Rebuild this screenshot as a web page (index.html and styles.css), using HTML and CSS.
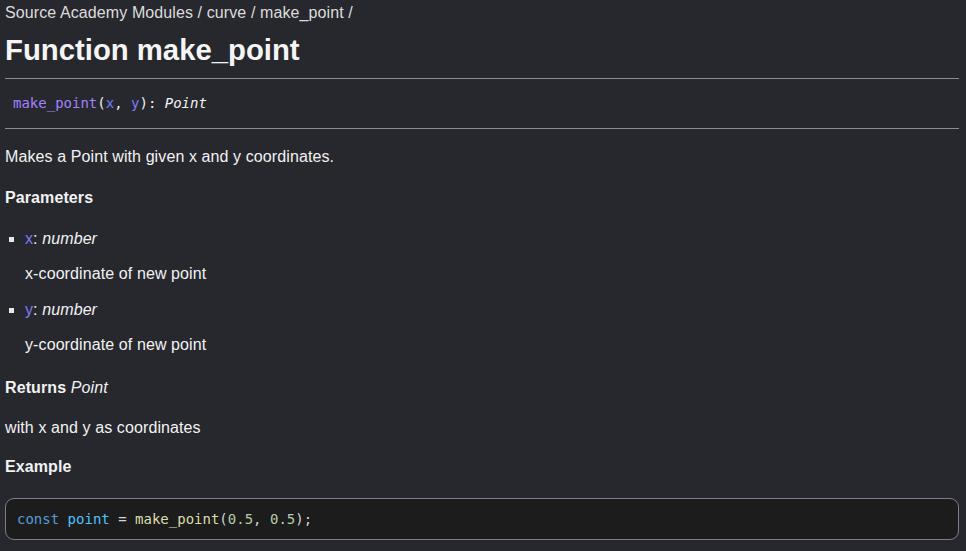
FILE: index.html
```html
<!DOCTYPE html>
<html lang="en">
<head>
<meta charset="utf-8">
<title>make_point</title>
<link rel="stylesheet" href="styles.css">
</head>
<body>
<div class="page">
  <div class="breadcrumb">Source Academy Modules / curve / make_point /</div>
  <h1 class="title">Function make_point</h1>
  <div class="signature"><span class="fn">make_point</span>(<span class="param">x</span>, <span class="param">y</span>): <em class="type">Point</em></div>
  <p class="desc">Makes a Point with given x and y coordinates.</p>
  <h4 class="heading">Parameters</h4>
  <ul class="params">
    <li>
      <div class="param-line"><span class="param">x</span>: <em>number</em></div>
      <p class="param-desc">x-coordinate of new point</p>
    </li>
    <li>
      <div class="param-line"><span class="param">y</span>: <em>number</em></div>
      <p class="param-desc">y-coordinate of new point</p>
    </li>
  </ul>
  <h4 class="heading returns">Returns <em class="ret-type">Point</em></h4>
  <p class="desc ret-desc">with x and y as coordinates</p>
  <h4 class="heading example">Example</h4>
  <pre class="code"><code><span class="kw">const</span> <span class="var">point</span> <span class="pun">=</span> <span class="call">make_point</span><span class="pun">(</span><span class="num">0.5</span><span class="pun">,</span> <span class="num">0.5</span><span class="pun">);</span></code></pre>
</div>
</body>
</html>
```
FILE: styles.css
```css
html, body {
  margin: 0;
  padding: 0;
  background: #27282e;
}
body {
  color: #f2f2f2;
  font-family: "Liberation Sans", Arial, sans-serif;
  font-size: 16px;
  letter-spacing: 0.1px;
}
.page {
  padding: 3px 7px 10px 5px;
}
.breadcrumb {
  line-height: 20px;
  color: #dcdcdc;
}
.title {
  margin: 9px 0 10px;
  font-size: 29.3px;
  line-height: 36px;
  font-weight: 700;
  color: #f5f5f5;
  letter-spacing: 0;
}
.signature {
  border-top: 1px solid #8b8b9a;
  border-bottom: 1px solid #8b8b9a;
  padding: 14px 8px 14px 8px;
  font-family: "DejaVu Sans Mono", monospace;
  font-size: 14px;
  line-height: 21px;
  color: #f2f2f2;
  letter-spacing: 0;
}
.fn { color: #a280ff; }
.param { color: #7b7cf2; }
.type { font-style: italic; }
.desc {
  margin: 16px 0 0;
  line-height: 24px;
}
.heading {
  margin: 17px 0 0;
  font-size: 16px;
  font-weight: 700;
  line-height: 24px;
}
.params {
  margin: 17px 0 0;
  padding: 0 0 0 20px;
  list-style: square;
}
.params li {
  margin: 0 0 12px;
}
.params li::marker {
  color: #e8e8e8;
  font-size: 15px;
}
.param-line {
  line-height: 24px;
}
.param-desc {
  margin: 11px 0 0;
  line-height: 24px;
}
.heading.returns {
  margin-top: 19px;
}
.ret-type {
  font-weight: 400;
}
.ret-desc {
  margin-top: 16px;
}
.heading.example {
  margin-top: 15px;
}
.code {
  margin: 19px 0 0;
  background: #1c1c1d;
  border: 1px solid #7c7c8c;
  border-radius: 9px;
  padding: 10px 11px;
  font-family: "DejaVu Sans Mono", monospace;
  font-size: 14px;
  line-height: 20px;
  color: #d4d4d4;
  letter-spacing: 0;
}
.kw { color: #569cd6; }
.var { color: #4fc1ff; }
.call { color: #dcdcaa; }
.num { color: #b5cea8; }
.pun { color: #d4d4d4; }
```
